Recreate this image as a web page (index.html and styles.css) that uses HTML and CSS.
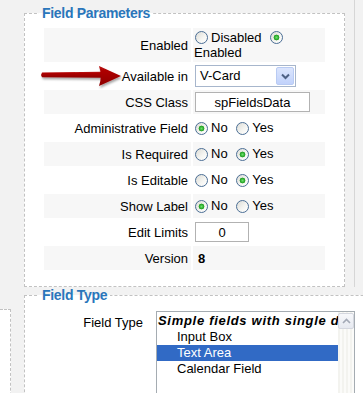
FILE: index.html
```html
<!DOCTYPE html>
<html lang="en">

<head>
    <meta charset="UTF-8">
    <title>Field Parameters</title>
    <link rel="stylesheet" href="styles.css">
</head>

<body>
    <div class="top-panel">
        <fieldset class="group params">
            <legend>Field Parameters</legend>
            <table class="form">
                <tr class="tall">
                    <td class="key">Enabled</td>
                    <td class="val"><input type="radio" class="radio" name="enabled">Disabled <input type="radio" class="radio" name="enabled" checked><wbr>Enabled</td>
                </tr>
                <tr>
                    <td class="key">Available in</td>
                    <td class="val">
                        <span class="combo">
                            <span class="combo-text">V-Card</span>
                            <span class="combo-btn">
                                <svg width="9" height="7" viewBox="0 0 9 7"><path d="M1 1.5 L4.5 5 L8 1.5" fill="none" stroke="#4d6185" stroke-width="2"/></svg>
                            </span>
                        </span>
                    </td>
                </tr>
                <tr>
                    <td class="key">CSS Class</td>
                    <td class="val"><input type="text" class="field wide" value="spFieldsData"></td>
                </tr>
                <tr>
                    <td class="key">Administrative Field</td>
                    <td class="val"><input type="radio" class="radio" name="admin" checked>No <input type="radio" class="radio" name="admin">Yes</td>
                </tr>
                <tr>
                    <td class="key">Is Required</td>
                    <td class="val"><input type="radio" class="radio" name="required">No <input type="radio" class="radio" name="required" checked>Yes</td>
                </tr>
                <tr>
                    <td class="key">Is Editable</td>
                    <td class="val"><input type="radio" class="radio" name="editable">No <input type="radio" class="radio" name="editable" checked>Yes</td>
                </tr>
                <tr>
                    <td class="key">Show Label</td>
                    <td class="val"><input type="radio" class="radio" name="label" checked>No <input type="radio" class="radio" name="label">Yes</td>
                </tr>
                <tr>
                    <td class="key">Edit Limits</td>
                    <td class="val"><input type="text" class="field short" value="0"></td>
                </tr>
                <tr>
                    <td class="key">Version</td>
                    <td class="val version">8</td>
                </tr>
            </table>
        </fieldset>

        <!-- red pointer drawn over the form -->
        <svg class="pointer" width="90" height="32" viewBox="0 0 90 32">
            <defs>
                <filter id="shade" x="-10%" y="-30%" width="120%" height="180%">
                    <feDropShadow dx="1" dy="2" stdDeviation="1.3" flood-color="#000" flood-opacity="0.35"/>
                </filter>
                <linearGradient id="red" x1="0" y1="0" x2="0" y2="1">
                    <stop offset="0" stop-color="#b80808"/>
                    <stop offset="1" stop-color="#8e0000"/>
                </linearGradient>
            </defs>
            <g filter="url(#shade)" fill="url(#red)">
                <path d="M6 12.5 L66 11.8 L66 17.8 L6 17.2 Q4.2 14.8 6 12.5 Z"/>
                <path d="M63 6 L85 16 L63 26 Q66.5 16 63 6 Z"/>
            </g>
        </svg>
    </div>

    <div class="bottom-row">
        <div class="side-box"></div>
        <fieldset class="group type">
            <legend>Field Type</legend>
            <div class="type-row">
                <div class="type-label">Field Type</div>
                <div class="listbox">
                    <div class="list-items">
                        <div class="list-group">Simple fields with single data</div>
                        <div class="list-item">Input Box</div>
                        <div class="list-item selected">Text Area</div>
                        <div class="list-item">Calendar Field</div>
                    </div>
                    <div class="scrollbar">
                        <span class="scroll-up">
                            <svg width="9" height="6" viewBox="0 0 9 6"><path d="M1 5 L4.5 1.5 L8 5" fill="none" stroke="#a3a9b6" stroke-width="1.6"/></svg>
                        </span>
                    </div>
                </div>
            </div>
        </fieldset>
    </div>
</body>

</html>
```

FILE: styles.css
```css
html,
body {
    overflow: hidden;
}

body {
    margin: 0;
    font-family: "Liberation Sans", Arial, sans-serif;
    font-size: 13px;
    color: #000;
    background-color: #f2f2f2;
}

/* first column, with its thin right edge */
.top-panel {
    position: relative;
    width: 355px;
    padding: 5px 0 0 24px;
    box-sizing: border-box;
    border-right: 1px solid #d6d6d6;
}

.group {
    margin: 0;
    min-width: 0;
    border: 1px dashed #c2c2c2;
    background-color: #fff;
}

.group legend {
    padding: 0 3px;
    font-size: 14px;
    font-weight: bold;
    line-height: 16px;
    letter-spacing: -0.3px;
    color: #2a76bb;
}

.params {
    width: 321px;
    box-sizing: border-box;
    padding: 5px 14px 14px 14px;
}

.form {
    margin-left: 3px;
    border-spacing: 2px;
    table-layout: fixed;
    width: 285px;
}

.form td {
    height: 24px;
    padding: 1px;
    line-height: 15px;
    box-sizing: border-box;
}

.form tr:nth-child(odd) td {
    background-color: #f7f7f7;
}

.form tr.tall td {
    height: 34px;
}

.key {
    width: 147px;
    text-align: right;
    padding-right: 3px !important;
}

.val {
    width: 132px;
}

.version {
    padding-left: 5px !important;
    font-weight: bold;
}

.radio {
    appearance: none;
    width: 13px;
    height: 13px;
    margin: 0 3px 0 1px;
    border: 1px solid #4b6e95;
    border-radius: 50%;
    box-sizing: border-box;
    background: linear-gradient(135deg, #dcdcd6, #f6f6f3 60%, #fff);
    vertical-align: middle;
    position: relative;
    top: -1px;
}

.val .radio:nth-of-type(2) {
    margin-left: 5px;
}

.radio:checked {
    background: radial-gradient(circle, #6ee06e 0, #2fae2f 2px, #1f9a1f 2.6px, transparent 3.2px),
        linear-gradient(135deg, #dcdcd6, #f6f6f3 60%, #fff);
}

.field {
    height: 20px;
    margin: 0 0 0 1px;
    padding: 0;
    border: 1px solid #b2b2b2;
    box-sizing: border-box;
    font-family: inherit;
    font-size: 13px;
    text-align: center;
    vertical-align: middle;
    color: #000;
}

.wide {
    width: 115px;
}

.short {
    width: 54px;
}

.combo {
    display: inline-flex;
    align-items: stretch;
    width: 101px;
    height: 22px;
    margin-left: 1px;
    border: 1px solid #a7b6cc;
    box-sizing: border-box;
    background-color: #fff;
    vertical-align: middle;
}

.combo-text {
    flex: 1;
    padding-left: 4px;
    line-height: 20px;
}

.combo-btn {
    display: flex;
    align-items: center;
    justify-content: center;
    width: 16px;
    margin: 1px;
    border: 1px solid #b9cbf3;
    border-radius: 2px;
    background: linear-gradient(#dbe5fd, #c1d2fb);
}

.pointer {
    position: absolute;
    left: 36px;
    top: 60px;
}

/* second row */
.bottom-row {
    display: flex;
    align-items: flex-start;
}

.side-box {
    flex-shrink: 0;
    width: 10px;
    height: 120px;
    margin-top: 22px;
    border-top: 1px dashed #c2c2c2;
    border-right: 1px dashed #c2c2c2;
    background-color: #fff;
}

.type {
    flex-shrink: 0;
    width: 420px;
    height: 140px;
    margin-left: 13px;
    padding: 8px 14px 0 14px;
    box-sizing: border-box;
}

.type-row {
    display: flex;
    gap: 13px;
}

.type-label {
    width: 104px;
    padding-top: 4px;
    text-align: right;
    line-height: 15px;
}

.listbox {
    display: flex;
    width: 199px;
    height: 100px;
    border: 1px solid #a5acb2;
    box-sizing: border-box;
    background-color: #fff;
}

.list-items {
    flex: 1;
    min-width: 0;
    overflow: hidden;
    padding-top: 1px;
    white-space: nowrap;
}

.list-group {
    padding-left: 1px;
    line-height: 16px;
    font-weight: bold;
    font-style: italic;
    letter-spacing: 0.7px;
}

.list-item {
    padding-left: 20px;
    line-height: 16px;
}

.list-item.selected {
    background-color: #316ac5;
    color: #fff;
}

.scrollbar {
    width: 16px;
    padding-top: 1px;
    background: repeating-linear-gradient(90deg, #f3f3ef 0 2px, #fbfbf9 2px 4px);
}

.scroll-up {
    display: flex;
    align-items: center;
    justify-content: center;
    height: 16px;
    border: 1px solid #d4d7df;
    border-radius: 2px;
    box-sizing: border-box;
    background: linear-gradient(#f7f8fb, #e6e9f0);
}
```
